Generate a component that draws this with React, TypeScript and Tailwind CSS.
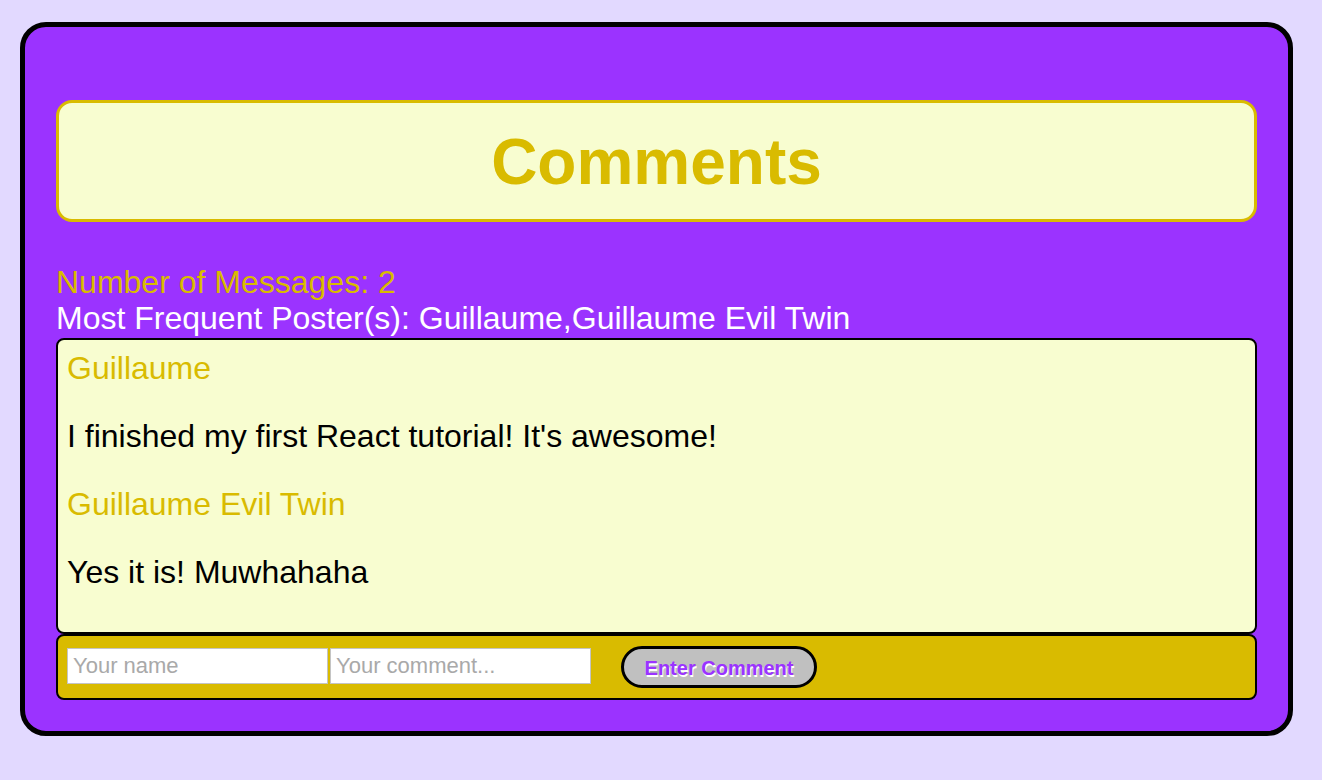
import { useState } from 'react';

interface Comment {
  author: string;
  text: string;
}

const comments: Comment[] = [
  { author: 'Guillaume', text: "I finished my first React tutorial! It's awesome!" },
  { author: 'Guillaume Evil Twin', text: 'Yes it is! Muwhahaha' },
];

function CommentItem({ author, text, last }: Comment & { last: boolean }) {
  return (
    <div className={last ? '' : 'mb-[32px]'}>
      <h2 className="text-[32px] leading-[36px] font-normal text-[#d9bb00]">{author}</h2>
      <p className="mt-[32px] text-[32px] leading-[36px] text-black">{text}</p>
    </div>
  );
}

export default function App() {
  const [name, setName] = useState('');
  const [text, setText] = useState('');

  return (
    <div className="min-h-[780px] bg-[#e2d9ff] pt-[22px] pl-[20px] font-['Liberation_Sans',Arial,sans-serif]">
      <div className="w-[1273px] rounded-[26px] border-[5px] border-black bg-[#9b33ff] px-[31px] pt-[73px] pb-[31px]">
        <div className="flex h-[122px] items-center justify-center rounded-[16px] border-[3px] border-[#d9bb00] bg-[#f8fdd0]">
          <h1 className="pt-[2px] text-[64px] leading-none font-bold text-[#d9bb00]">Comments</h1>
        </div>

        <div className="mt-[42px] text-[32px] leading-[36px]">
          <div className="text-[#d9bb00]">Number of Messages: {comments.length}</div>
          <div className="text-white">Most Frequent Poster(s): Guillaume,Guillaume Evil Twin</div>
        </div>

        <div className="mt-[2px] rounded-[8px] border-2 border-black bg-[#f8fdd0] px-[9px] pt-[10px] pb-[42px]">
          {comments.map((c, i) => (
            <CommentItem key={c.author} {...c} last={i === comments.length - 1} />
          ))}
        </div>

        <form
          className="flex h-[66px] items-start rounded-[8px] border-2 border-black bg-[#d9bb00] pl-[9px] pt-[10px]"
          onSubmit={(e) => e.preventDefault()}
        >
          <input
            value={name}
            onChange={(e) => setName(e.target.value)}
            placeholder="Your name"
            className="mt-[2px] h-[36px] w-[261px] border border-[#c4c4c4] bg-white px-[5px] text-[22px] text-black outline-none placeholder:text-[#a9a9a9]"
          />
          <input
            value={text}
            onChange={(e) => setText(e.target.value)}
            placeholder="Your comment..."
            className="mt-[2px] ml-[2px] h-[36px] w-[261px] border border-[#c4c4c4] bg-white px-[5px] text-[22px] text-black outline-none placeholder:text-[#a9a9a9]"
          />
          <button
            type="submit"
            className="ml-[30px] h-[42px] w-[196px] rounded-full border-[3px] border-black bg-[#c0c0c0] pt-[2px] text-[20px] font-bold text-[#9b33ff] [text-shadow:1px_2px_0_#ffffff]"
          >
            Enter Comment
          </button>
        </form>
      </div>
    </div>
  );
}
